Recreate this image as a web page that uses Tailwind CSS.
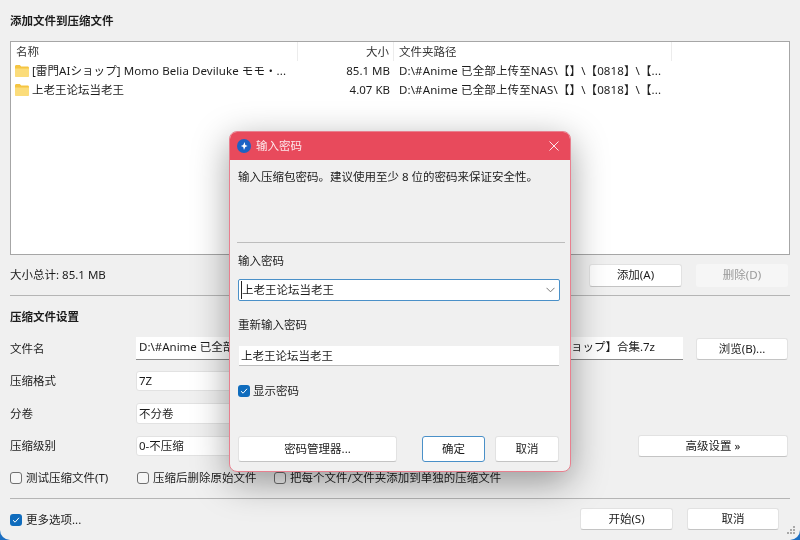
<!DOCTYPE html>
<html lang="zh-CN">
<head>
<meta charset="UTF-8">
<title>添加文件到压缩文件</title>
<script src="https://cdn.jsdelivr.net/npm/@tailwindcss/browser@4"></script>
</head>
<body class="bg-[#1b6fc2]">
<div class="relative w-[800px] h-[540px] overflow-hidden rounded-b-[10px] bg-[#f0f0f0] text-[#1c1c1c] text-[11.5px] blur-[0.3px] font-['Noto_Sans','Noto_Sans_CJK_SC',sans-serif]">

  <!-- title -->
  <div class="h-[41px] px-[10px] flex items-center font-bold">添加文件到压缩文件</div>

  <!-- file list -->
  <div class="mx-[10px] h-[214px] border border-[#a6a6a6] bg-white">
    <div class="flex h-[19px] items-center text-[#333]">
      <div class="w-[287px] h-full pl-[5px] flex items-center border-r border-[#ececec]">名称</div>
      <div class="w-[96px] h-full pr-[4px] flex items-center justify-end border-r border-[#ececec]">大小</div>
      <div class="w-[278px] h-full pl-[5px] flex items-center border-r border-[#ececec]">文件夹路径</div>
    </div>
    <div class="flex h-[19px] items-center">
      <div class="w-[287px] pl-[4px] flex items-center gap-[3px]">
        <svg width="14" height="12" viewBox="0 0 14 12"><path d="M0 1.5C0 .7.6 0 1.4 0h3.4l1.4 1.5h6.4c.8 0 1.4.6 1.4 1.4v7.7c0 .8-.6 1.4-1.4 1.4H1.4C.6 12 0 11.4 0 10.6z" fill="#f5c542"/><path d="M0 3.4h14v7.2c0 .8-.6 1.4-1.4 1.4H1.4C.6 12 0 11.4 0 10.6z" fill="#fbdc7a"/></svg>
        <span class="whitespace-nowrap tracking-[0.08px]">[雷門AIショップ] Momo Belia Deviluke モモ・...</span>
      </div>
      <div class="w-[96px] pr-[4px] text-right">85.1 MB</div>
      <div class="w-[278px] pl-[5px] whitespace-nowrap tracking-[0.12px]">D:\#Anime 已全部上传至NAS\【】\【0818】\【...</div>
    </div>
    <div class="flex h-[19px] items-center">
      <div class="w-[287px] pl-[4px] flex items-center gap-[3px]">
        <svg width="14" height="12" viewBox="0 0 14 12"><path d="M0 1.5C0 .7.6 0 1.4 0h3.4l1.4 1.5h6.4c.8 0 1.4.6 1.4 1.4v7.7c0 .8-.6 1.4-1.4 1.4H1.4C.6 12 0 11.4 0 10.6z" fill="#f5c542"/><path d="M0 3.4h14v7.2c0 .8-.6 1.4-1.4 1.4H1.4C.6 12 0 11.4 0 10.6z" fill="#fbdc7a"/></svg>
        <span>上老王论坛当老王</span>
      </div>
      <div class="w-[96px] pr-[4px] text-right">4.07 KB</div>
      <div class="w-[278px] pl-[5px] whitespace-nowrap tracking-[0.12px]">D:\#Anime 已全部上传至NAS\【】\【0818】\【...</div>
    </div>
  </div>

  <!-- total -->
  <div class="mx-[10px] h-[41px] flex items-center border-b border-[#b5b5b5]">
    <span>大小总计: 85.1 MB</span>
    <button class="ml-auto w-[93px] h-[23px] bg-white rounded-[3px] border border-[#e2e2e2] border-b-[#c4c4c4]">添加(A)</button>
    <button class="ml-[14px] mr-[2px] w-[92px] h-[23px] bg-[#f6f6f6] rounded-[3px] text-[#9a9a9a]">删除(D)</button>
  </div>

  <!-- settings -->
  <div class="h-[41px] px-[10px] flex items-center font-bold">压缩文件设置</div>
  <div class="flex h-[23px] pl-[10px] items-center">
    <div class="w-[126px]">文件名</div>
    <div class="w-[547px] h-[23px] pl-[3px] pr-[28px] pb-[2px] flex items-center justify-between bg-white border-b border-[#8a8a8a] whitespace-nowrap">
      <span>D:\#Anime 已全部</span><span>ョップ】合集.7z</span>
    </div>
    <button class="ml-[13px] w-[92px] h-[22px] bg-white rounded-[3px] border border-[#e2e2e2] border-b-[#c4c4c4]">浏览(B)...</button>
  </div>
  <div class="flex h-[20px] mt-[11px] pl-[10px] items-center">
    <div class="w-[126px]">压缩格式</div>
    <div class="w-[300px] h-[20px] pl-[2px] flex items-center bg-white border border-[#e2e2e2] rounded-[3px]">7Z</div>
  </div>
  <div class="flex h-[21px] mt-[12px] pl-[10px] items-center">
    <div class="w-[126px]">分卷</div>
    <div class="w-[300px] h-[21px] pl-[2px] flex items-center bg-white border border-[#e2e2e2] rounded-[3px]">不分卷</div>
  </div>
  <div class="flex h-[22px] mt-[11px] pl-[10px] items-center">
    <div class="w-[126px]">压缩级别</div>
    <div class="w-[300px] h-[20px] pl-[2px] flex items-center bg-white border border-[#e2e2e2] rounded-[3px]">0-不压缩</div>
    <button class="ml-auto mr-[12px] w-[150px] h-[22px] bg-white rounded-[3px] border border-[#e2e2e2] border-b-[#c4c4c4]">高级设置 »</button>
  </div>
  <div class="flex h-[22px] mt-[10px] pl-[10px] items-center">
    <label class="w-[127px] flex items-center gap-[4px]"><span class="w-[12px] h-[12px] rounded-[3px] border border-[#707070] bg-[#f6f6f6]"></span>测试压缩文件(T)</label>
    <label class="w-[137px] flex items-center gap-[4px]"><span class="w-[12px] h-[12px] rounded-[3px] border border-[#707070] bg-[#f6f6f6]"></span>压缩后删除原始文件</label>
    <label class="flex items-center gap-[4px]"><span class="w-[12px] h-[12px] rounded-[3px] border border-[#707070] bg-[#f6f6f6]"></span>把每个文件/文件夹添加到单独的压缩文件</label>
  </div>
  <div class="mx-[10px] mt-[9px] border-t border-[#b5b5b5] h-[32px] flex items-center">
    <label class="mt-[10px] mr-auto flex items-center gap-[4px]">
      <span class="w-[12px] h-[12px] rounded-[3px] bg-[#0f6cbd] flex items-center justify-center"><svg width="8" height="8" viewBox="0 0 8 8" fill="none" stroke="#fff" stroke-width="1"><path d="M1 4.2 3.1 6.2 7 1.8"/></svg></span>更多选项...
    </label>
    <button class="w-[93px] h-[22px] mt-[8px] bg-white rounded-[3px] border border-[#e2e2e2] border-b-[#c4c4c4]">开始(S)</button>
    <button class="ml-[14px] mr-[11px] w-[92px] h-[22px] mt-[8px] bg-white rounded-[3px] border border-[#e2e2e2] border-b-[#c4c4c4]">取消</button>
  </div>

  <!-- resize grip -->
  <svg class="absolute right-[4px] bottom-[5px]" width="9" height="9" viewBox="0 0 9 9" fill="#a9a9a9"><rect x="6" y="0" width="2" height="2"/><rect x="3" y="3" width="2" height="2"/><rect x="6" y="3" width="2" height="2"/><rect x="0" y="6" width="2" height="2"/><rect x="3" y="6" width="2" height="2"/><rect x="6" y="6" width="2" height="2"/></svg>

  <!-- password dialog -->
  <div class="absolute left-[229px] top-[131px] w-[342px] h-[341px] flex flex-col rounded-[8px] overflow-hidden border border-[#e8808f] bg-[#f0f0f0] shadow-[0_10px_36px_rgba(0,0,0,0.38)]">
    <div class="h-[29px] -mt-px -mx-px shrink-0 flex items-center pl-[8px] pr-[12px] bg-[#e84a5c] text-[#fde8eb]">
      <svg width="14" height="14" viewBox="0 0 14 14"><circle cx="7" cy="7" r="7" fill="#1c62c4"/><path d="M7.6 3 8.3 6 10.6 7 8.3 8 7 11 6.2 8 3.9 7 6.2 6z" fill="#fff"/></svg>
      <span class="ml-[5px]">输入密码</span>
      <svg class="ml-auto" width="10" height="10" viewBox="0 0 10 10" stroke="#fde8eb" stroke-width="1"><path d="M.5.5l9 9M9.500.5l-9 9"/></svg>
    </div>
    <div class="h-[34px] shrink-0 pl-[8px] flex items-center">输入压缩包密码。建议使用至少 8 位的密码来保证安全性。</div>
    <div class="ml-[7px] mr-[5px] mt-[48px] border-t border-[#bdbdbd]"></div>
    <div class="h-[36px] shrink-0 pl-[8px] flex items-center">输入密码</div>
    <div class="ml-[8px] mr-[10px] h-[22px] shrink-0 pl-[2px] pr-[4px] flex items-center bg-white border border-[#4a90c8] rounded-[2px]">
      <span class="border-l border-[#222]">上老王论坛当老王</span>
      <svg class="ml-auto" width="9" height="6" viewBox="0 0 9 6" fill="none" stroke="#777"><path d="M.5.8 4.5 4.8 8.5.8"/></svg>
    </div>
    <div class="h-[45px] shrink-0 pt-[3px] pl-[8px] flex items-center">重新输入密码</div>
    <div class="ml-[9px] mr-[11px] h-[20px] shrink-0 pl-[2px] flex items-center bg-white border-b border-[#bdbdbd]">上老王论坛当老王</div>
    <label class="ml-[8px] mt-[18px] h-[14px] flex items-center gap-[3px]">
      <span class="w-[12px] h-[12px] rounded-[3px] bg-[#0f6cbd] flex items-center justify-center"><svg width="8" height="8" viewBox="0 0 8 8" fill="none" stroke="#fff" stroke-width="1"><path d="M1 4.2 3.1 6.2 7 1.8"/></svg></span>显示密码
    </label>
    <div class="flex ml-[8px] mt-[38px]">
      <button class="w-[159px] h-[26px] bg-white rounded-[3px] border border-[#e2e2e2] border-b-[#c4c4c4]">密码管理器...</button>
      <button class="ml-[25px] w-[63px] h-[26px] bg-white rounded-[3px] border border-[#4a90c8]">确定</button>
      <button class="ml-[10px] w-[64px] h-[26px] bg-white rounded-[3px] border border-[#e2e2e2] border-b-[#c4c4c4]">取消</button>
    </div>
  </div>
</div>
</body>
</html>
